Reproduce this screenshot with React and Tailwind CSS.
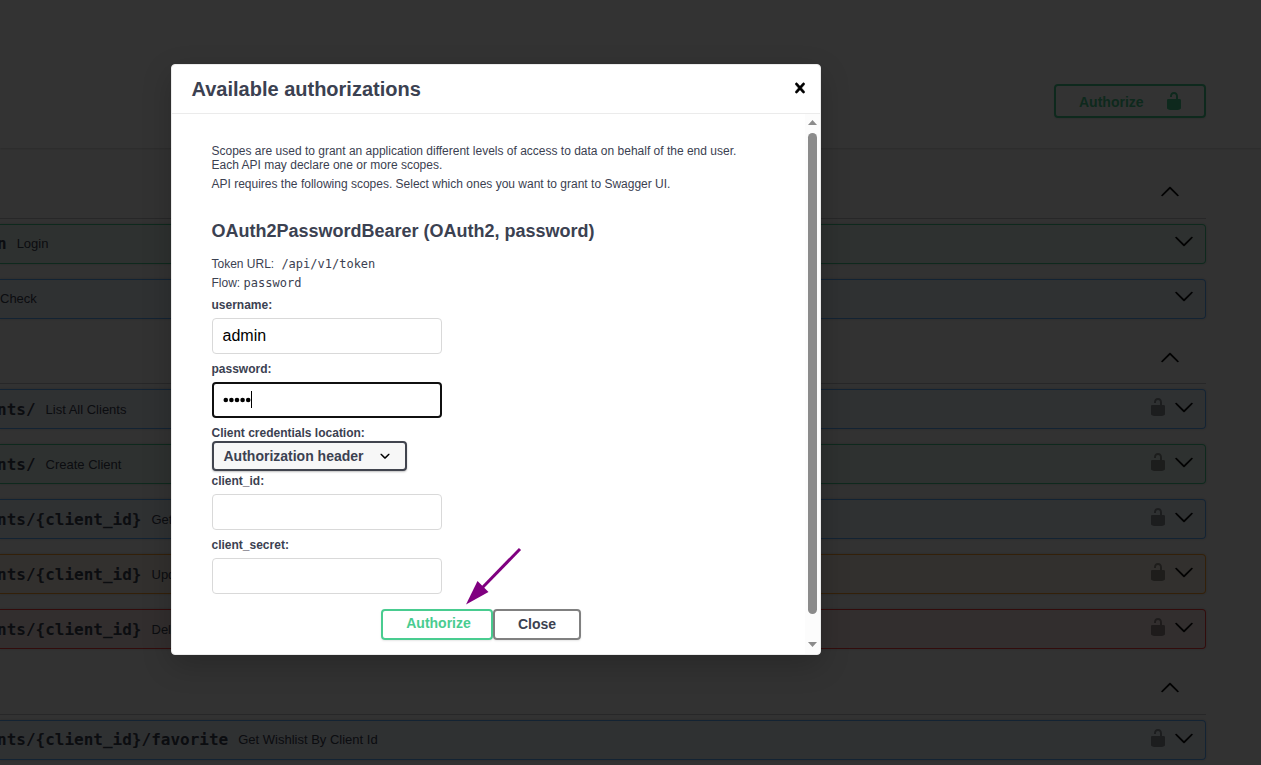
import React from "react";

const SANS = "font-['Liberation_Sans',sans-serif]";
const MONO = "font-['DejaVu_Sans_Mono',monospace]";

const TONES = {
  get: "border-[#61affe] bg-[#61affe]/10",
  post: "border-[#49cc90] bg-[#49cc90]/10",
  put: "border-[#fca130] bg-[#fca130]/10",
  del: "border-[#f93e3e] bg-[#f93e3e]/10",
};

function Unlock({ className }) {
  return (
    <svg viewBox="0 0 20 20" width="20" height="20" fill="currentColor" className={className}>
      <path d="M15.8 8H14V5.6C14 2.703 12.665 1 10 1 7.334 1 6 2.703 6 5.6V6h2v-.801C8 3.754 8.797 3 10 3c1.203 0 2 .754 2 2.199V8H4c-.553 0-1 .646-1 1.199V17c0 .549.428 1.139.951 1.307l1.197.387C5.672 18.861 6.55 19 7.1 19h5.8c.549 0 1.428-.139 1.951-.307l1.196-.387c.524-.167.953-.757.953-1.306V9.199C17 8.646 16.352 8 15.8 8z" />
    </svg>
  );
}

function Arrow({ up, className = "" }) {
  return (
    <svg viewBox="0 0 20 20" width="20" height="20" stroke="black" strokeWidth="0.3" className={className}>
      <path
        d={
          up
            ? "M 17.418 14.908 C 17.69 15.176 18.127 15.176 18.397 14.908 C 18.667 14.64 18.668 14.207 18.397 13.939 L 10.489 6.109 C 10.219 5.841 9.782 5.841 9.51 6.109 L 1.602 13.939 C 1.332 14.207 1.332 14.64 1.602 14.908 C 1.873 15.176 2.311 15.176 2.581 14.908 L 10 7.767 L 17.418 14.908 Z"
            : "M17.418 6.109c.272-.268.709-.268.979 0s.271.701 0 .969l-7.908 7.83c-.27.268-.707.268-.979 0l-7.908-7.83c-.27-.268-.27-.701 0-.969.271-.268.709-.268.979 0L10 13.25l7.418-7.141z"
        }
      />
    </svg>
  );
}

function TagHeader({ className = "" }) {
  return (
    <div className={`flex items-center justify-end border-b border-[#3b4151]/30 pr-[26px] mb-[5px] ${className}`}>
      <Arrow up />
    </div>
  );
}

function Operation({ tone, path, label, locked, indent = "pl-0", nudge = "" }) {
  return (
    <div className={`flex h-10 items-center rounded-r border border-l-0 shadow-[0_0_3px_rgba(0,0,0,0.19)] mb-[15px] ${TONES[tone]}`}>
      <div className={`flex flex-1 items-center gap-2.5 whitespace-nowrap ${indent} ${nudge}`}>
        {path && <span className={`text-[16px] font-semibold ${MONO}`}>{path}</span>}
        <span className="text-[13px]">{label}</span>
      </div>
      {locked && <Unlock className="mr-[6px] -mt-1 opacity-40 text-black" />}
      <Arrow className={locked ? "mr-[11px] -mt-1" : "mr-[11px] -mt-1.5"} />
    </div>
  );
}

function Field({ label, children }) {
  return (
    <div className="h-16">
      <label className="block h-5 text-[12px] leading-[14px] font-bold">{label}</label>
      {children}
    </div>
  );
}

const INPUT = "ml-[0.5px] flex h-9 w-[230px] items-center rounded bg-white text-[16px] text-black";

function Page() {
  return (
    <div className="h-[765px] overflow-hidden bg-[#fafafa]">
      <div className="flex h-[148px] items-start justify-end bg-white pt-[84px] pr-[55px] shadow-[0_1px_2px_rgba(0,0,0,0.15)]">
        <div className="flex h-[34px] w-[152px] items-center rounded border-2 border-[#49cc90] pl-[23px] text-[#49cc90] shadow-[0_1px_2px_rgba(0,0,0,0.1)]">
          <span className="w-[85px] pt-[2px] text-[14px] font-bold">Authorize</span>
          <Unlock />
        </div>
      </div>
      <div className="mr-[55px] pt-[18px]">
        <TagHeader className="h-[53px] pb-[2px]" />
        <Operation tone="post" path="n" label="Login" indent="-ml-[3px]" />
        <Operation tone="get" label="Check" />
        <TagHeader className="h-[50px] pb-[4px]" />
        <Operation tone="get" path="nts/" label="List All Clients" indent="-ml-[3px]" nudge="pt-[2px]" locked />
        <Operation tone="post" path="nts/" label="Create Client" indent="-ml-[3px]" nudge="pt-[2px]" locked />
        <Operation tone="get" path="nts/{client_id}" label="Get" indent="-ml-[3px]" nudge="pt-[2px]" locked />
        <Operation tone="put" path="nts/{client_id}" label="Update" indent="-ml-[3px]" nudge="pt-[2px]" locked />
        <Operation tone="del" path="nts/{client_id}" label="Delete" indent="-ml-[3px]" nudge="pt-[2px]" locked />
        <TagHeader className="h-[51px] pb-[5px]" />
        <Operation tone="get" path="nts/{client_id}/favorite" label="Get Wishlist By Client Id" indent="-ml-[3px]" locked />
      </div>
    </div>
  );
}

function Modal() {
  return (
    <div className="absolute top-[64.4px] left-[170.500px] flex h-[591px] w-[650px] flex-col overflow-hidden rounded border border-[#ebebeb] bg-white shadow-[0_10px_30px_rgba(0,0,0,0.2)]">
      <div className="flex h-[49px] shrink-0 items-center justify-between border-b border-[#ebebeb] pr-[10px] pl-5">
        <h3 className="text-[20px] font-semibold">Available authorizations</h3>
        <svg viewBox="0 0 20 20" width="20" height="20" className="-mt-[3px]" stroke="black" strokeWidth="0.5">
          <path d="M14.348 14.849c-.469.469-1.229.469-1.697 0L10 11.819l-2.651 3.029c-.469.469-1.229.469-1.697 0-.469-.469-.469-1.229 0-1.697l2.758-3.15-2.759-3.152c-.469-.469-.469-1.228 0-1.697.469-.469 1.228-.469 1.697 0L10 8.183l2.651-3.031c.469-.469 1.228-.469 1.697 0 .469.469.469 1.229 0 1.697l-2.758 3.152 2.758 3.15c.469.469.469 1.229 0 1.698z" />
        </svg>
      </div>
      <div className="flex min-h-0 flex-1">
        <div className="flex-1 pt-[29.600px] pl-10">
          <p className="mb-[5px] w-[540px] text-[12px] leading-[14px]">
            Scopes are used to grant an application different levels of access to data on behalf of the end user. Each API may declare one or more scopes.
          </p>
          <p className="text-[12px] leading-[14px]">
            API requires the following scopes. Select which ones you want to grant to Swagger UI.
          </p>
          <h4 className="mt-[29px] mb-[15px] text-[18px] leading-[22px] font-bold">OAuth2PasswordBearer (OAuth2, password)</h4>
          <p className="mb-[5px] flex h-[14px] items-center text-[12px] leading-[14px]">
            Token URL: <code className={`ml-[7.200px] ${MONO}`}>/api/v1/token</code>
          </p>
          <p className="mb-2 flex h-[14px] items-center text-[12px] leading-[14px]">
            Flow: <code className={`ml-[3.400px] ${MONO}`}>password</code>
          </p>
          <Field label="username:">
            <div className={`${INPUT} border border-[#d9d9d9] px-[9.500px]`}>admin</div>
          </Field>
          <Field label="password:">
            <div className={`${INPUT} border-2 border-[#101010] px-[8.500px]`}>
              <svg width="28" height="6" viewBox="0 0 28 6" className="mr-[0.5px]">
                {[2.8, 8.4, 14, 19.6, 25.2].map((x) => (
                  <circle key={x} cx={x} cy="3" r="2.3" />
                ))}
              </svg>
              <span className="h-[17px] w-px bg-black" />
            </div>
          </Field>
          <div className="h-12">
            <label className="block h-[15px] text-[12px] leading-[14px] font-bold">Client credentials location:</label>
            <div className="ml-[0.5px] flex h-[30px] w-[195px] items-center justify-between rounded border-2 border-[#41444e] bg-[#f7f7f7] pr-2.5 pl-[9.500px] text-[14px] font-bold shadow-[0_1px_2px_rgba(0,0,0,0.25)]">
              <span className="pt-px">Authorization header</span>
              <svg viewBox="0 0 20 20" width="20" height="20">
                <path d="M13.418 7.859c.271-.268.709-.268.978 0 .27.268.272.701 0 .969l-3.908 3.83c-.27.268-.707.268-.979 0l-3.908-3.83c-.27-.267-.27-.701 0-.969.271-.268.709-.268.978 0L10 11l3.418-3.141z" />
              </svg>
            </div>
          </div>
          <Field label="client_id:">
            <div className={`${INPUT} border border-[#d9d9d9]`} />
          </Field>
          <Field label="client_secret:">
            <div className={`${INPUT} border border-[#d9d9d9]`} />
          </Field>
          <div className="mt-[7.500px] ml-[169.500px] flex text-[14px] font-bold">
            <button className="flex h-[31px] w-[112px] justify-center rounded border-2 border-[#49cc90] pt-[1.700px] pl-[3px] leading-[20px] text-[#49cc90] shadow-[0_1px_2px_rgba(0,0,0,0.1)]">
              Authorize
            </button>
            <button className="flex h-[31px] w-[88px] justify-center rounded border-2 border-[#808080] pt-[2.700px] leading-[20px] shadow-[0_1px_2px_rgba(0,0,0,0.1)]">
              Close
            </button>
          </div>
        </div>
        <div className="flex w-[15px] flex-col items-center bg-[#fcfcfc]">
          <svg width="9" height="5" viewBox="0 0 9 5" className="mt-[6px] shrink-0">
            <path d="M4.5 0L9 5H0z" fill="#8b8b8b" />
          </svg>
          <div className="mt-[7.500px] h-[481.500px] w-[9px] rounded-full bg-[#8b8b8b]" />
          <svg width="9" height="5" viewBox="0 0 9 5" className="mt-[27.500px] shrink-0">
            <path d="M0 0H9L4.5 5z" fill="#8b8b8b" />
          </svg>
        </div>
      </div>
    </div>
  );
}

export default function App() {
  return (
    <div className={`relative h-[765px] w-[1261px] overflow-hidden text-[#3b4151] ${SANS}`}>
      <Page />
      <div className="absolute inset-0 bg-black/80" />
      <Modal />
      <svg className="absolute top-[540px] left-[460px]" width="70" height="70" viewBox="0 0 70 70">
        <path d="M60 9L22 48" stroke="#800080" strokeWidth="3" />
        <path d="M6 64.5L17.5 41L28.500 52z" fill="#800080" />
      </svg>
    </div>
  );
}
